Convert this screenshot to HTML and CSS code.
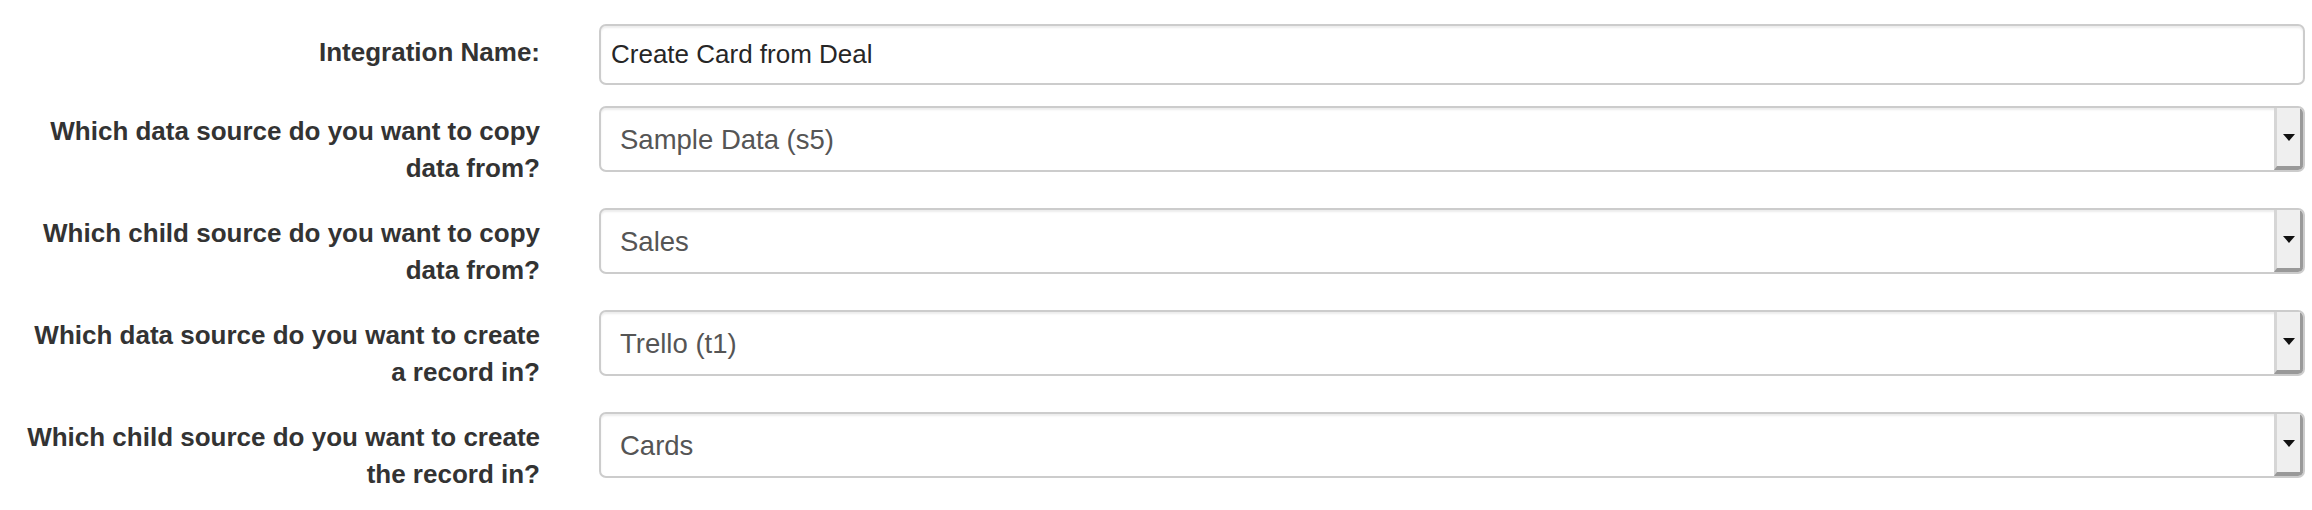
FILE: index.html
```html
<!DOCTYPE html>
<html lang="en">
<head>
    <meta charset="UTF-8">
    <meta name="viewport" content="width=device-width, initial-scale=1.0">
    <title>Integration Settings</title>
    <link rel="stylesheet" href="styles.css">
</head>
<body>

    <form class="form">
        <div class="form-row">
            <label class="form-label form-label-single" for="name">Integration Name:</label>
            <input type="text" id="name" class="form-input" value="Create Card from Deal">
        </div>

        <div class="form-row">
            <label class="form-label" for="source">Which data source do you want to copy data from?</label>
            <div class="select-box">
                <select id="source" class="select-input">
                    <option>Sample Data (s5)</option>
                </select>
                <span class="select-btn"><svg width="12" height="7" viewBox="0 0 12 7"><polygon points="0,0 12,0 6,7" fill="#111"/></svg></span>
            </div>
        </div>

        <div class="form-row">
            <label class="form-label" for="child-source">Which child source do you want to copy data from?</label>
            <div class="select-box">
                <select id="child-source" class="select-input">
                    <option>Sales</option>
                </select>
                <span class="select-btn"><svg width="12" height="7" viewBox="0 0 12 7"><polygon points="0,0 12,0 6,7" fill="#111"/></svg></span>
            </div>
        </div>

        <div class="form-row">
            <label class="form-label" for="target">Which data source do you want to create a record in?</label>
            <div class="select-box">
                <select id="target" class="select-input">
                    <option>Trello (t1)</option>
                </select>
                <span class="select-btn"><svg width="12" height="7" viewBox="0 0 12 7"><polygon points="0,0 12,0 6,7" fill="#111"/></svg></span>
            </div>
        </div>

        <div class="form-row">
            <label class="form-label" for="child-target">Which child source do you want to create the record in?</label>
            <div class="select-box">
                <select id="child-target" class="select-input">
                    <option>Cards</option>
                </select>
                <span class="select-btn"><svg width="12" height="7" viewBox="0 0 12 7"><polygon points="0,0 12,0 6,7" fill="#111"/></svg></span>
            </div>
        </div>
    </form>

</body>
</html>
```

FILE: styles.css
```css
body {
    margin: 0;
    background-color: #fff;
    font-family: 'Liberation Sans', Arial, sans-serif;
    color: #333;
}
.form {
    display: flex;
    flex-direction: column;
    gap: 21px;
    padding: 24px 7px 0 20px;
}
.form-row {
    display: grid;
    grid-template-columns: 520px 1fr;
    column-gap: 59px;
    align-items: start;
}
.form-label {
    padding-top: 7px;
    font-size: 26px;
    font-weight: bold;
    line-height: 37px;
    text-align: right;
    color: #333;
}
.form-label-single {
    padding-top: 10px;
}
.form-input {
    box-sizing: border-box;
    width: 100%;
    height: 61px;
    margin: 0;
    padding: 0 10px;
    font-family: inherit;
    font-size: 26px;
    color: #262626;
    border: 2px solid #ccc;
    border-radius: 7px;
    box-shadow: inset 0 2px 2px rgba(0,0,0,0.075);
    outline: none;
}
.select-box {
    box-sizing: border-box;
    display: flex;
    height: 66px;
    border: 2px solid #ccc;
    border-radius: 7px;
    overflow: hidden;
    background-color: #fff;
    box-shadow: inset 0 2px 2px rgba(0,0,0,0.075);
}
.select-input {
    flex: 1;
    appearance: none;
    -webkit-appearance: none;
    margin: 0;
    padding: 0 0 0 19px;
    border: none;
    background: transparent;
    font-family: inherit;
    font-size: 27.5px;
    color: #555;
    outline: none;
}
.select-btn {
    box-sizing: border-box;
    display: flex;
    align-items: center;
    justify-content: center;
    width: 29px;
    background-color: #efefef;
    border-left: 3px solid #d6d6d6;
    border-right: 3px solid #999;
    border-bottom: 4px solid #999;
}
```
